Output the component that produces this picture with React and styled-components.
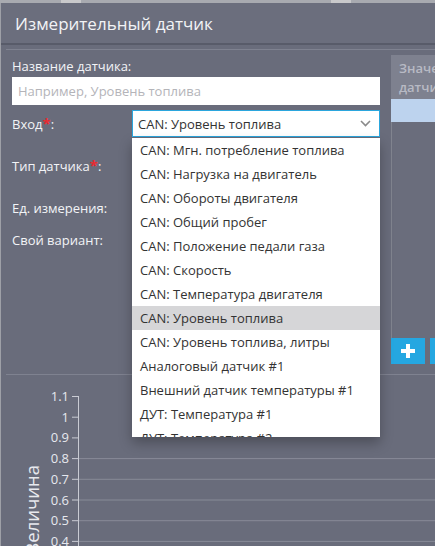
import React from "react";
import styled, { createGlobalStyle } from "styled-components";

const GlobalStyle = createGlobalStyle`
  html, body { margin: 0; padding: 0; }
  body {
    background: #a9abb1;
    font-family: "Open Sans", "Noto Sans", "Liberation Sans", sans-serif;
    overflow: hidden;
  }
  #root { width: 435px; height: 546px; overflow: hidden; }
`;

const TopStrip = styled.div`
  height: 3px;
  background: #a8aab0;
  display: flex;
`;

const Spot = styled.span`
  display: block;
  width: 20px;
  height: 3px;
  margin-left: ${(p) => p.$ml}px;
  background: #c9c9cb;
`;

const Modal = styled.div`
  height: 543px;
  border-left: 1px solid #9ea0a7;
  background: #696c7b;
  overflow: hidden;
  display: flex;
  flex-direction: column;
`;

const Header = styled.div`
  height: 39px;
  flex: none;
  display: flex;
  align-items: center;
  padding-left: 14px;
  background: #6b6e7d;
  border-bottom: 2px solid #585b69;
  color: #f2f3f6;
  font-size: 17px;
  padding-top: 1px;
  box-sizing: content-box;
`;

const Body = styled.div`
  flex: 1;
  padding: 4px 0 0 5px;
  display: flex;
  flex-direction: column;
  min-height: 0;
`;

const Separator = styled.div`
  height: 1px;
  flex: none;
  background: #7f8290;
  margin-top: ${(p) => p.$mt || 0}px;
`;

const ContentRow = styled.div`
  display: flex;
  padding-left: 6px;
  flex: none;
`;

const FormColumn = styled.div`
  width: 368px;
  flex: none;
  padding-top: 7px;
`;

const Label = styled.div`
  font-size: 13px;
  line-height: 18px;
  color: #f3f4f7;
`;

const TextInput = styled.input`
  display: block;
  box-sizing: border-box;
  width: 100%;
  height: 28px;
  margin-top: 2px;
  border: none;
  outline: none;
  padding: 0 6px;
  font-family: inherit;
  font-size: 13px;
  color: #333;
  background: #fff;
  &::placeholder { color: #b4b4b9; }
`;

const FieldRow = styled.div`
  display: flex;
  align-items: center;
  height: 27px;
  margin-top: ${(p) => p.$mt}px;
`;

const FieldLabel = styled.div`
  width: 120px;
  flex: none;
  font-size: 13px;
  color: #f3f4f7;
`;

const Req = styled.span`
  color: #ea2a30;
  font-weight: 700;
  font-size: 15px;
  line-height: 13px;
`;

const SelectWrap = styled.div`
  position: relative;
  flex: 1;
  height: 27px;
`;

const SelectBox = styled.div`
  box-sizing: border-box;
  height: 27px;
  border: 1px solid #2ba6dd;
  background: #fff;
  display: flex;
  align-items: center;
  justify-content: space-between;
  padding: 0 8px 0 5px;
  font-size: 13px;
  color: #333;
`;

const Menu = styled.div`
  position: absolute;
  left: 0;
  right: 0;
  top: 28px;
  height: 299px;
  overflow: hidden;
  background: #fff;
  box-shadow: 0 6px 12px rgba(0, 0, 0, 0.28);
  z-index: 5;
`;

const MenuItem = styled.div`
  height: 24px;
  line-height: 24px;
  padding-left: 8px;
  font-size: 13px;
  color: #333;
  white-space: nowrap;
  background: ${(p) => (p.$active ? "#d6d6d8" : "#fff")};
`;

const SideColumn = styled.div`
  width: 160px;
  flex: none;
  margin-left: 11px;
  margin-top: 5px;
  display: flex;
  flex-direction: column;
`;

const SideHeader = styled.div`
  height: 44px;
  box-sizing: border-box;
  padding: 4px 8px 0;
  background: #7e818f;
  color: #b8bac4;
  font-size: 13px;
  font-weight: 600;
  line-height: 19px;
`;

const SideSelected = styled.div`
  height: 23px;
  background: #bdd3ee;
`;

const SidePanel = styled.div`
  height: 216px;
  border-left: 1px solid #81848f;
  background: #6a6d7c;
`;

const ButtonRow = styled.div`
  display: flex;
  gap: 5px;
  height: 26px;
`;

const SquareButton = styled.button`
  width: 34px;
  height: 26px;
  flex: none;
  border: none;
  padding: 0;
  background: #25a7e1;
  display: flex;
  align-items: center;
  justify-content: center;
`;

const ChartArea = styled.div`
  flex: 1;
  margin-left: -5px;
  min-height: 0;
`;

const options = [
  "CAN: Мгн. потребление топлива",
  "CAN: Нагрузка на двигатель",
  "CAN: Обороты двигателя",
  "CAN: Общий пробег",
  "CAN: Положение педали газа",
  "CAN: Скорость",
  "CAN: Температура двигателя",
  "CAN: Уровень топлива",
  "CAN: Уровень топлива, литры",
  "Аналоговый датчик #1",
  "Внешний датчик температуры #1",
  "ДУТ: Температура #1",
  "ДУТ: Температура #2",
];

const ticks = ["1.1", "1", "0.9", "0.8", "0.7", "0.6", "0.5", "0.4", "0.3"];

function Chart() {
  return (
    <svg width="434" height="172" viewBox="0 0 434 172">
      {ticks.map((t, i) => {
        const y = 21.5 + i * 20.7;
        return (
          <g key={t}>
            {i >= 3 && (
              <line x1="77" x2="434" y1={y} y2={y} stroke="#888b98" strokeWidth="1" />
            )}
            <line x1="71" x2="77" y1={y} y2={y} stroke="#c9cbd3" strokeWidth="1" />
            <text
              x="68"
              y={y + 4.5}
              textAnchor="end"
              fontSize="13"
              fill="#e6e8ee"
              fontFamily="Open Sans, sans-serif"
            >
              {t}
            </text>
          </g>
        );
      })}
      <line x1="77.5" x2="77.5" y1="21" y2="172" stroke="#c9cbd3" strokeWidth="1" />
      <text
        transform="translate(38,90) rotate(-90)"
        textAnchor="end"
        fontSize="18.5"
        fill="#e8e9ee"
        fontFamily="Open Sans, sans-serif"
      >
        Величина
      </text>
    </svg>
  );
}

export default function App() {
  return (
    <>
      <GlobalStyle />
      <TopStrip>
        <Spot $ml={61} />
        <Spot $ml={250} />
      </TopStrip>
      <Modal>
        <Header>Измерительный датчик</Header>
        <Body>
          <Separator />
          <ContentRow>
            <FormColumn>
              <Label>Название датчика:</Label>
              <TextInput placeholder="Например, Уровень топлива" />
              <FieldRow $mt={5}>
                <FieldLabel>
                  Вход<Req>*</Req>:
                </FieldLabel>
                <SelectWrap>
                  <SelectBox>
                    <span>CAN: Уровень топлива</span>
                    <svg width="11" height="7" viewBox="0 0 11 7">
                      <path d="M1 1 L5.5 5.5 L10 1" fill="none" stroke="#8a8a8a" strokeWidth="1.6" />
                    </svg>
                  </SelectBox>
                  <Menu>
                    {options.map((o) => (
                      <MenuItem key={o} $active={o === "CAN: Уровень топлива"}>
                        {o}
                      </MenuItem>
                    ))}
                  </Menu>
                </SelectWrap>
              </FieldRow>
              <FieldRow $mt={15}>
                <FieldLabel>
                  Тип датчика<Req>*</Req>:
                </FieldLabel>
              </FieldRow>
              <FieldRow $mt={15}>
                <FieldLabel>Ед. измерения:</FieldLabel>
              </FieldRow>
              <FieldRow $mt={5}>
                <FieldLabel>Свой вариант:</FieldLabel>
              </FieldRow>
            </FormColumn>
            <SideColumn>
              <SideHeader>
                Значение
                <br />
                датчика
              </SideHeader>
              <SideSelected />
              <SidePanel />
              <ButtonRow>
                <SquareButton>
                  <svg width="16" height="16" viewBox="0 0 16 16">
                    <path d="M8 1 V15 M1 8 H15" stroke="#fff" strokeWidth="4" />
                  </svg>
                </SquareButton>
                <SquareButton />
              </ButtonRow>
            </SideColumn>
          </ContentRow>
          <Separator $mt={10} />
          <ChartArea>
            <Chart />
          </ChartArea>
        </Body>
      </Modal>
    </>
  );
}
